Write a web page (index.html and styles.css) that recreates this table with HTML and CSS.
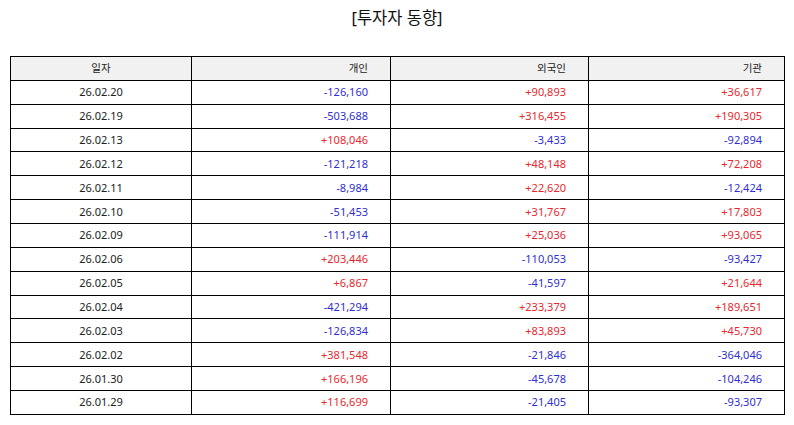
FILE: index.html
```html
<!DOCTYPE html>
<html lang="ko">
<head>
<meta charset="utf-8">
<title>투자자 동향</title>
<link rel="stylesheet" href="styles.css">
</head>
<body>
<div class="page">
  <h1 class="title">[투자자 동향]</h1>
  <table class="grid">
    <colgroup>
      <col class="c-date"><col class="c-num"><col class="c-num2"><col class="c-num3">
    </colgroup>
    <thead>
      <tr><th class="center">일자</th><th>개인</th><th>외국인</th><th>기관</th></tr>
    </thead>
    <tbody>
      <tr><td class="center">26.02.20</td><td class="neg">-126,160</td><td class="pos">+90,893</td><td class="pos">+36,617</td></tr>
      <tr><td class="center">26.02.19</td><td class="neg">-503,688</td><td class="pos">+316,455</td><td class="pos">+190,305</td></tr>
      <tr><td class="center">26.02.13</td><td class="pos">+108,046</td><td class="neg">-3,433</td><td class="neg">-92,894</td></tr>
      <tr><td class="center">26.02.12</td><td class="neg">-121,218</td><td class="pos">+48,148</td><td class="pos">+72,208</td></tr>
      <tr><td class="center">26.02.11</td><td class="neg">-8,984</td><td class="pos">+22,620</td><td class="neg">-12,424</td></tr>
      <tr><td class="center">26.02.10</td><td class="neg">-51,453</td><td class="pos">+31,767</td><td class="pos">+17,803</td></tr>
      <tr><td class="center">26.02.09</td><td class="neg">-111,914</td><td class="pos">+25,036</td><td class="pos">+93,065</td></tr>
      <tr><td class="center">26.02.06</td><td class="pos">+203,446</td><td class="neg">-110,053</td><td class="neg">-93,427</td></tr>
      <tr><td class="center">26.02.05</td><td class="pos">+6,867</td><td class="neg">-41,597</td><td class="pos">+21,644</td></tr>
      <tr><td class="center">26.02.04</td><td class="neg">-421,294</td><td class="pos">+233,379</td><td class="pos">+189,651</td></tr>
      <tr><td class="center">26.02.03</td><td class="neg">-126,834</td><td class="pos">+83,893</td><td class="pos">+45,730</td></tr>
      <tr><td class="center">26.02.02</td><td class="pos">+381,548</td><td class="neg">-21,846</td><td class="neg">-364,046</td></tr>
      <tr><td class="center">26.01.30</td><td class="pos">+166,196</td><td class="neg">-45,678</td><td class="neg">-104,246</td></tr>
      <tr><td class="center">26.01.29</td><td class="pos">+116,699</td><td class="neg">-21,405</td><td class="neg">-93,307</td></tr>
    </tbody>
  </table>
</div>
</body>
</html>
```

FILE: styles.css
```css
html, body {
  margin: 0;
  padding: 0;
  background: #ffffff;
}

body {
  font-family: "Noto Sans", "Noto Sans CJK KR", sans-serif;
  color: #222222;
}

.page {
  width: 794px;
  padding: 0 10px;
  box-sizing: border-box;
}

.title {
  margin: 0;
  padding-top: 7px;
  height: 56px;
  box-sizing: border-box;
  font-size: 16.5px;
  line-height: 22px;
  font-weight: normal;
  text-align: center;
  color: #111111;
}

.grid {
  width: 774px;
  border-collapse: collapse;
  table-layout: fixed;
  font-size: 11px;
}

.c-date { width: 181px; }
.c-num { width: 199px; }
.c-num2 { width: 198px; }
.c-num3 { width: 196px; }

.grid tr {
  height: 23.87px;
}

.grid th,
.grid td {
  border: 1px solid #000000;
  padding: 0 22px 0 0;
  text-align: right;
  font-weight: normal;
  line-height: 14px;
  white-space: nowrap;
}

.grid th {
  background: #f1f1f1;
  color: #222222;
  font-size: 10.5px;
}

.grid .center {
  text-align: center;
  padding: 0;
}

.pos { color: #e8282e; }
.neg { color: #2f2fd0; }
```
